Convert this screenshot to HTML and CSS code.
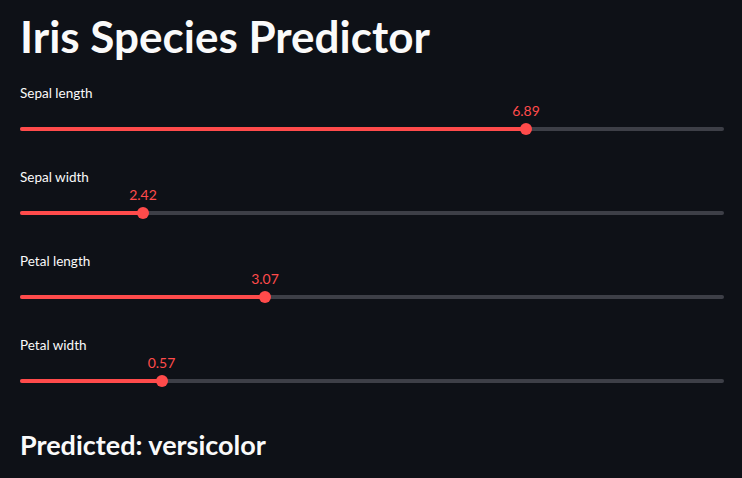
FILE: index.html
```html
<!DOCTYPE html>
<html>
<head>
<meta charset="utf-8">
<link rel="stylesheet" href="styles.css">
</head>
<body>
<main class="app">
  <h1 class="title">Iris Species Predictor</h1>
  <section class="field">
    <div class="label">Sepal length</div>
    <div class="slider">
      <div class="track"><div class="fill" style="width:71.88%"></div></div>
      <div class="thumb-pos" style="left:71.88%"><span class="value">6.89</span><span class="thumb"></span></div>
    </div>
  </section>
  <section class="field">
    <div class="label">Sepal width</div>
    <div class="slider">
      <div class="track"><div class="fill" style="width:17.47%"></div></div>
      <div class="thumb-pos" style="left:17.47%"><span class="value">2.42</span><span class="thumb"></span></div>
    </div>
  </section>
  <section class="field">
    <div class="label">Petal length</div>
    <div class="slider">
      <div class="track"><div class="fill" style="width:34.8%"></div></div>
      <div class="thumb-pos" style="left:34.8%"><span class="value">3.07</span><span class="thumb"></span></div>
    </div>
  </section>
  <section class="field">
    <div class="label">Petal width</div>
    <div class="slider">
      <div class="track"><div class="fill" style="width:20.1%"></div></div>
      <div class="thumb-pos" style="left:20.1%"><span class="value">0.57</span><span class="thumb"></span></div>
    </div>
  </section>
  <h3 class="result">Predicted: versicolor</h3>
</main>
</body>
</html>
```

FILE: styles.css
```css
html, body {
  margin: 0;
  padding: 0;
  background: #0e1117;
  color: #fafafa;
  font-family: Lato, "Open Sans", sans-serif;
}
.app {
  width: 704px;
  padding: 0 18px 0 20px;
  display: flex;
  flex-direction: column;
}
.title {
  margin: 0;
  padding-top: 10px;
  height: 73px;
  font-size: 44px;
  line-height: 52px;
  font-weight: 700;
  letter-spacing: 0;
}
.field {
  height: 84px;
  display: flex;
  flex-direction: column;
}
.label {
  height: 20px;
  line-height: 20px;
  font-size: 13.5px;
  font-weight: 400;
}
.slider {
  position: relative;
  padding-top: 24px;
}
.track {
  height: 4px;
  background: #3d3f47;
  border-radius: 2px;
}
.fill {
  height: 100%;
  background: #ff4b4b;
  border-radius: 2px;
}
.thumb-pos {
  position: absolute;
  top: 0;
  width: 0;
  height: 0;
}
.value {
  position: absolute;
  top: 0;
  left: 0;
  transform: translateX(-50%);
  font-size: 14px;
  line-height: 16px;
  color: #ff4b4b;
  white-space: nowrap;
}
.thumb {
  position: absolute;
  top: 20px;
  left: -6px;
  width: 12px;
  height: 12px;
  border-radius: 50%;
  background: #ff4b4b;
}
.result {
  margin: 8px 0 0;
  font-size: 27px;
  line-height: 36px;
  font-weight: 700;
}
```
